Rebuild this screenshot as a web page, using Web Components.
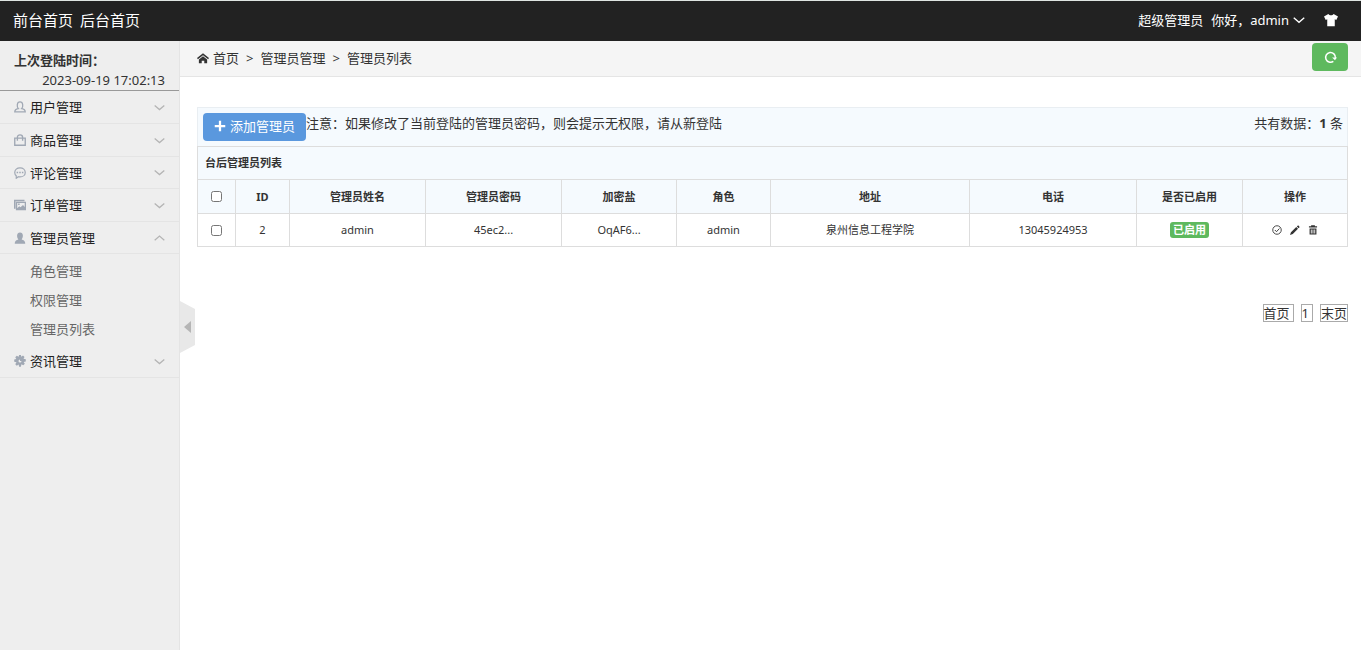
<!DOCTYPE html>
<html lang="zh-CN">
<head>
<meta charset="utf-8">
<title>管理员列表</title>
<style>
html, body { height: 100%; }
body { margin: 0; background: #fff; color: #333; font: 13px/20px "Noto Sans", "Noto Sans CJK SC", sans-serif; }
</style>
</head>
<body>
<admin-app></admin-app>
<script>
const ICONS = {
  user: '<path fill="none" stroke="currentColor" stroke-width="1.700" d="M1 14.500h14c0-3-2-3.800-4.800-4.300 2-2 2.500-9-2.200-9S3.800 8.200 5.800 10.200C3 10.700 1 11.500 1 14.500z"/>',
  bag: '<path fill="none" stroke="currentColor" stroke-width="1.800" d="M1 5.500h14V15H1zM4.500 9V4.500C4.500 0 11.500 0 11.500 4.500V9"/>',
  chat: '<path fill="none" stroke="currentColor" stroke-width="1.600" d="M8 1.200c4 0 7 2.500 7 6S12 13.200 8 13.200c-.8 0-1.500 0-2.200-.2L3 15v-3.300C1.700 10.600 1 9.100 1 7.200 1 3.700 4 1.200 8 1.200z"/><path fill="currentColor" d="M3.500 6.300h2v2h-2zM7 6.300h2v2H7zM10.500 6.300h2v2h-2z"/>',
  picture: '<path fill="currentColor" fill-rule="evenodd" d="M0 1h14v2H2v10H0zM2.500 3.500H16V15H2.500zM4.300 5.200v7l2.700-2.400 1.700 1.200L12 8l2.300 2.500V5.200zM5.500 6h2v2h-2z"/>',
  userfill: '<path fill="currentColor" d="M8 .5c5 0 4.500 6.500 2.200 9 .3 1.200 4.800.8 4.800 6H1c0-5.200 4.500-4.800 4.800-6C3.500 7 3 .5 8 .5z"/>',
  gear: '<path fill="currentColor" fill-rule="evenodd" d="M6.800 0h2.400l.5 2.300 2.300-1.500 2 2L12.700 5l3 .5v3l-2.800.7 1.500 2.500-2 2-2.500-1.400-.7 3.400H6.800l-.6-3-2.500 1.500-2-2 1.600-2.500L.3 9V6L3 5.300 1.700 2.900l2-2 2.500 1.500zM8 6a2 2 0 1 0 2 2H8z"/>',
  down: '<path fill="none" stroke="currentColor" stroke-width="1.800" d="M1 5l7 6 7-6"/>',
  up: '<path fill="none" stroke="currentColor" stroke-width="1.800" d="M1 12l7-6 7 6"/>',
  home: '<path fill="currentColor" d="M8 1.500l8 6.500-1.200 1.500L8 4.200 1.200 9.500 0 8zM8 5.500l5.500 4.500v5H9.700v-3.500H6.300V15H2.500v-5z"/>',
  shirt: '<path fill="currentColor" d="M5 1c1 2 5 2 6 0l5 3-2 4-1.700-1V15H3.700V7L2 8 0 4z"/>',
  refresh: '<path fill="none" stroke="currentColor" stroke-width="1.900" d="M11.500 12.800A6 6 0 1 1 14 8.500"/><path fill="currentColor" d="M10 8h6l-2.500 3.500z"/>',
  plus: '<path fill="currentColor" d="M6.500 1h3v5.500H15v3H9.500V15h-3V9.500H1v-3h5.500z"/>',
  check: '<circle cx="8" cy="8" r="6.800" fill="none" stroke="currentColor" stroke-width="1.400"/><path fill="none" stroke="currentColor" stroke-width="1.500" d="M4.500 8l2.700 2.700 4.600-5"/>',
  pencil: '<path fill="currentColor" d="M0 16l1.500-4.500L10 3.200 12.800 6 4.500 14.500zM11 2.200L13 .5 15.500 3 13.800 5z"/>',
  trash: '<path fill="currentColor" fill-rule="evenodd" d="M5 2V.5h6V2h3.500v2h-13V2zM2.500 5.500h11V15h-11zM4.500 7v6.500h1.400V7zm2.800 0v6.500h1.400V7zm2.800 0v6.500h1.400V7z"/>'
};

function define(name, html, ready) {
  customElements.define(name, class extends HTMLElement {
    connectedCallback() {
      if (this.shadowRoot) return;
      const root = this.attachShadow({ mode: "open" });
      root.innerHTML = html;
      if (ready) ready(this, root);
    }
  });
}

define("ui-icon", `<style>
:host { display: inline-block; width: 12px; height: 12px; flex: none; }
svg { display: block; width: 100%; height: 100%; }
</style><svg viewBox="0 0 16 16" aria-hidden="true"></svg>`, (el, root) => {
  root.querySelector("svg").innerHTML = ICONS[el.getAttribute("name")];
});

define("top-bar", `<style>
:host { display: flex; justify-content: space-between; align-items: center; box-sizing: border-box; height: 41px; padding: 0 22px 2px 13px; background: #222; color: #fff; border-top: 1px solid #dfe5e2; }
nav, .account { display: flex; align-items: center; }
nav { gap: 7px; font-size: 15px; }
.account { gap: 8px; }
a, button { color: inherit; text-decoration: none; }
button { display: flex; align-items: center; font: inherit; padding: 0; border: 0; background: none; }
.who { gap: 4px; }
.skin { margin-left: 10px; }
.skin ui-icon { width: 16px; height: 14px; }
</style>
<nav><a href="#front">前台首页</a><a href="#back">后台首页</a></nav>
<div class="account"><span>超级管理员</span><button class="who">你好&#65292;admin<ui-icon name="down"></ui-icon></button><button class="skin" aria-label="换肤"><ui-icon name="shirt"></ui-icon></button></div>`);

define("menu-group", `<style>
:host { display: block; }
.head { box-sizing: border-box; display: flex; align-items: center; width: 100%; height: 33px; margin: 0; padding: 0 14px; gap: 4px; border: 0; border-bottom: 1px solid #e4e4e4; background: none; color: #222; font: inherit; text-align: left; }
:host(:nth-child(odd):not(:first-child)) .head { height: 32px; }
.head ui-icon { color: #a0a8b4; }
.label { flex: 1; }
.head .arrow { width: 11px; height: 11px; color: #b4b4b4; }
.sub { display: none; padding: 3px 0 1px; }
:host([open]) .sub { display: block; }
::slotted(a) { display: block; padding-left: 30px; line-height: 29px; color: #666; text-decoration: none; }
</style>
<button class="head"></button>
<div class="sub"><slot></slot></div>`, (el, root) => {
  const head = root.querySelector(".head");
  const open = el.hasAttribute("open");
  head.setAttribute("aria-expanded", open);
  head.innerHTML = `<ui-icon name="${el.getAttribute("icon")}"></ui-icon><span class="label">${el.getAttribute("label")}</span><ui-icon class="arrow" name="${open ? "up" : "down"}"></ui-icon>`;
});

define("side-bar", `<style>
:host { display: block; box-sizing: border-box; width: 180px; flex: none; background: #eee; border-right: 1px solid #e4e4e4; }
.last { padding: 9px 14px 0; height: 40px; border-bottom: 1px solid #999; }
.last strong, .last time { display: block; }
.last time { text-align: right; white-space: nowrap; }
</style>
<div class="last"><strong>上次登陆时间&#65306;</strong><time datetime="2023-09-19T17:02:13">2023-09-19 17:02:13</time></div>
<nav>
<menu-group icon="user" label="用户管理"></menu-group>
<menu-group icon="bag" label="商品管理"></menu-group>
<menu-group icon="chat" label="评论管理"></menu-group>
<menu-group icon="picture" label="订单管理"></menu-group>
<menu-group icon="userfill" label="管理员管理" open><a href="#role">角色管理</a><a href="#auth">权限管理</a><a href="#list">管理员列表</a></menu-group>
<menu-group icon="gear" label="资讯管理"></menu-group>
</nav>`);

define("side-toggle", `<style>
:host { position: absolute; left: 180px; top: 50%; margin-top: -24px; }
button { display: flex; align-items: center; width: 15px; height: 52px; padding: 0 0 0 4px; border: 0; background: #e8e8e8; clip-path: polygon(0 0, 100% 8px, 100% 44px, 0 100%); }
i { border: solid transparent; border-width: 6px 7px 6px 0; border-right-color: #b5b5b5; }
</style><button aria-label="收起菜单"><i></i></button>`);

define("crumb-bar", `<style>
:host { display: flex; justify-content: space-between; align-items: flex-start; height: 35px; padding: 0 13px 0 17px; background: #f5f5f5; border-bottom: 1px solid #e5e5e5; }
nav { display: flex; align-items: center; gap: 7px; height: 34px; }
a { display: flex; align-items: center; gap: 4px; color: inherit; text-decoration: none; }
button { display: flex; align-items: center; justify-content: center; width: 36px; height: 28px; margin: 2px 0 0; padding: 0; border: 0; border-radius: 4px; background: #5eb95e; color: #fff; }
button ui-icon { width: 13px; height: 13px; }
</style>
<nav aria-label="位置"><a href="#home"><ui-icon name="home"></ui-icon>首页</a><span>&gt;</span><span>管理员管理</span><span>&gt;</span><span>管理员列表</span></nav>
<button aria-label="刷新"><ui-icon name="refresh"></ui-icon></button>`);

define("tool-strip", `<style>
:host { display: flex; justify-content: space-between; align-items: flex-start; box-sizing: border-box; height: 39px; padding: 5px 4px 0 5px; background: #f5fafe; border: 1px solid #e9eef2; border-bottom: 0; }
.left { display: flex; align-items: flex-start; }
button { display: flex; align-items: center; justify-content: center; gap: 4px; width: 103px; height: 28px; padding: 0 0 2px; border: 0; border-radius: 4px; background: #5a98de; color: #fff; font: inherit; }
</style>
<div class="left"><button><ui-icon name="plus"></ui-icon>添加管理员</button><span>注意&#65306;如果修改了当前登陆的管理员密码&#65292;则会提示无权限&#65292;请从新登陆</span></div>
<span>共有数据&#65306;<strong>1</strong> 条</span>`);

define("status-label", `<style>
:host { display: inline-block; padding: 0 3px; border-radius: 3px; background: #5eb95e; color: #fff; font-weight: bold; line-height: 16px; }
</style><slot></slot>`);

define("admin-table", `<style>
:host { display: block; }
table { width: 100%; table-layout: fixed; border-collapse: collapse; font-size: 11px; line-height: 18px; }
th, td { height: 33px; box-sizing: border-box; padding: 0 7px; border: 1px solid #ddd; text-align: center; white-space: nowrap; }
th { background: #f5fafe; }
.names th { height: 34px; }
.title { text-align: left; }
input { display: block; width: 11px; height: 11px; margin: 0 auto; }
.ops { display: flex; justify-content: center; gap: 8px; }
.ops button { display: block; padding: 0; border: 0; background: none; color: #333; }
.ops ui-icon { display: block; width: 10px; height: 10px; }
</style>
<table>
<colgroup><col style="width:38px"><col style="width:54px"><col style="width:136px"><col style="width:136px"><col style="width:115px"><col style="width:94px"><col style="width:199px"><col style="width:167px"><col style="width:106px"><col style="width:105px"></colgroup>
<thead>
<tr><th class="title" colspan="10">台后管理员列表</th></tr>
<tr class="names"><th><input type="checkbox" aria-label="全选"></th><th>ID</th><th>管理员姓名</th><th>管理员密码</th><th>加密盐</th><th>角色</th><th>地址</th><th>电话</th><th>是否已启用</th><th>操作</th></tr>
</thead>
<tbody>
<tr><td><input type="checkbox" aria-label="选择 admin"></td><td>2</td><td>admin</td><td>45ec2...</td><td>OqAF6...</td><td>admin</td><td>泉州信息工程学院</td><td>13045924953</td><td><status-label>已启用</status-label></td>
<td><div class="ops"><button aria-label="启用"><ui-icon name="check"></ui-icon></button><button aria-label="编辑"><ui-icon name="pencil"></ui-icon></button><button aria-label="删除"><ui-icon name="trash"></ui-icon></button></div></td></tr>
</tbody>
</table>`);

define("page-nav", `<style>
:host { display: flex; justify-content: flex-end; gap: 7px; margin-top: 57px; }
a { border: 1px solid #aaa; padding-right: 3px; color: inherit; line-height: 16px; text-decoration: none; }
a:last-child { padding-right: 0; }
</style><a href="#first">首页</a><a href="#1">1</a><a href="#last">末页</a>`);

define("admin-app", `<style>
:host { display: flex; flex-direction: column; min-height: 100%; position: relative; }
.body { display: flex; flex: 1; }
main { flex: 1; min-width: 0; }
.content { padding: 30px 13px 20px 17px; }
</style>
<top-bar></top-bar>
<div class="body"><side-bar></side-bar>
<main><crumb-bar></crumb-bar><div class="content"><tool-strip></tool-strip><admin-table></admin-table><page-nav></page-nav></div></main></div>
<side-toggle></side-toggle>`);
</script>
</body>
</html>
